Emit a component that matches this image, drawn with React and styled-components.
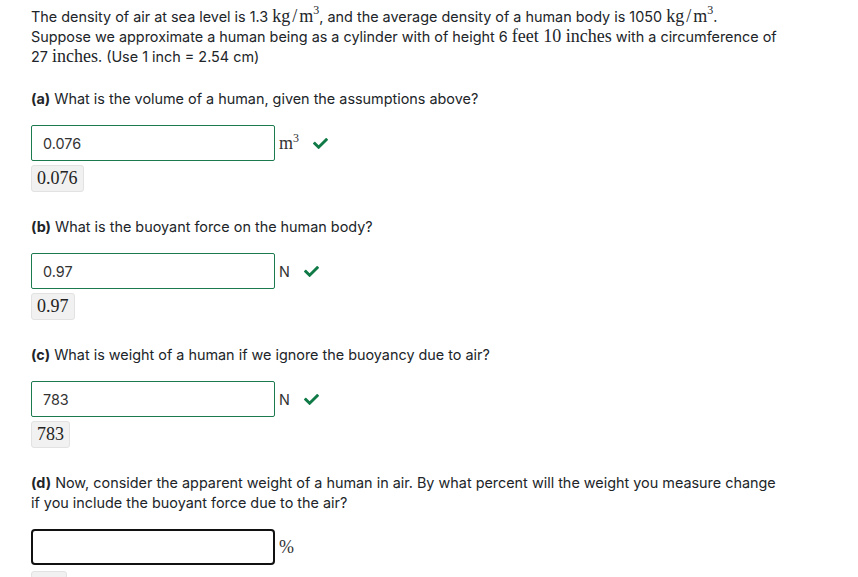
import React from 'react'
import styled, { createGlobalStyle } from 'styled-components'
import { FaCheck } from 'react-icons/fa'

const GlobalStyle = createGlobalStyle`
  body {
    margin: 0;
    background: #fff;
    color: #212529;
    font-family: Inter, "Noto Sans", sans-serif;
    font-size: 14.4px;
  }
`
const Page = styled.div`
  padding: 7px 0 0 31px;
  max-width: 753px;
`
const Para = styled.p`
  margin: 0;
  line-height: 20px;
`
const Intro = styled(Para)`
  margin-bottom: 22px;
`
const Part = styled.div`
  margin-bottom: 25px;
`
const Label = styled.b`
  font-weight: 700;
`
const M = styled.span`
  font-family: "Liberation Serif", "DejaVu Serif", serif;
  font-size: 18px;
  line-height: 0;
  white-space: nowrap;
  sup {
    font-size: 12px;
    vertical-align: 8px;
    line-height: 0;
  }
`
const Slash = styled.span`
  margin: 0 2px;
`
const AnswerRow = styled.div`
  display: flex;
  align-items: center;
  margin-top: 16px;
  height: 36px;
`
const Input = styled.div`
  box-sizing: border-box;
  width: 244px;
  height: 36px;
  display: flex;
  align-items: center;
  padding-left: ${p => (p.$active ? 10 : 11)}px;
  border: ${p => (p.$active ? '2px solid #111' : '1px solid #1b7a4e')};
  border-radius: ${p => (p.$active ? 4 : 2)}px;
  font-size: 14.4px;
  color: #333;
`
const Unit = styled.span`
  margin-left: 4px;
  font-family: ${p => (p.$math ? '"Liberation Serif", serif' : 'Inter, sans-serif')};
  font-size: ${p => (p.$math ? 18 : 14.4)}px;
  color: #333;
  sup {
    font-size: 12px;
    vertical-align: 7px;
    line-height: 0;
  }
`
const Check = styled(FaCheck)`
  color: #107a47;
  width: 15px;
  height: 15px;
  margin-left: 14px;
`
const Feedback = styled.div`
  display: inline-block;
  box-sizing: border-box;
  margin-top: 4px;
  height: ${p => (p.$empty ? 8 : 27)}px;
  min-width: 36px;
  padding: 0 5px;
  line-height: 25px;
  background: #f1f1f1;
  border: 1px solid #e2e2e2;
  border-radius: 3px;
  font-family: "Liberation Serif", "DejaVu Serif", serif;
  font-size: 18px;
  color: #222;
`

const Kgm3 = () => (
  <M>
    kg<Slash>/</Slash>m<sup>3</sup>
  </M>
)

const parts = [
  {
    label: '(a)',
    text: 'What is the volume of a human, given the assumptions above?',
    value: '0.076',
    unit: (
      <>
        m<sup>3</sup>
      </>
    ),
    math: true,
  },
  { label: '(b)', text: 'What is the buoyant force on the human body?', value: '0.97', unit: 'N' },
  {
    label: '(c)',
    text: 'What is weight of a human if we ignore the buoyancy due to air?',
    value: '783',
    unit: 'N',
  },
]

const App = () => (
  <>
    <GlobalStyle />
    <Page>
      <Intro>
        The density of air at sea level is 1.3 <Kgm3 />, and the average density of a human body
        is 1050 <Kgm3 />.
        <br />
        Suppose we approximate a human being as a cylinder with of height 6 <M>feet 10 inches</M>{' '}
        with a circumference of 27 <M>inches</M>. (Use 1 inch = 2.54 cm)
      </Intro>
      {parts.map(p => (
        <Part key={p.label}>
          <Para>
            <Label>{p.label}</Label> {p.text}
          </Para>
          <AnswerRow>
            <Input>{p.value}</Input>
            <Unit $math={p.math}>{p.unit}</Unit>
            <Check />
          </AnswerRow>
          <Feedback>{p.value}</Feedback>
        </Part>
      ))}
      <Part>
        <Para>
          <Label>(d)</Label> Now, consider the apparent weight of a human in air. By what percent will
          the weight you measure change if you include the buoyant force due to the air?
        </Para>
        <AnswerRow>
          <Input $active />
          <Unit $math>%</Unit>
        </AnswerRow>
        <Feedback $empty />
      </Part>
    </Page>
  </>
)

export default App
